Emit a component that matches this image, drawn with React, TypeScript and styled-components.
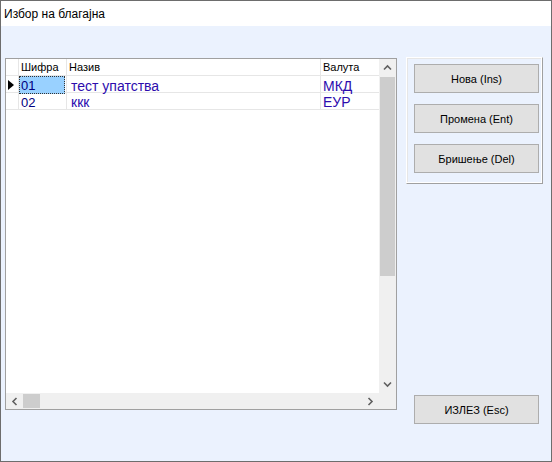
import React from "react";
import styled, { createGlobalStyle } from "styled-components";

const GlobalStyle = createGlobalStyle`
  html, body {
    margin: 0;
    padding: 0;
    background: #ffffff;
  }
  * {
    box-sizing: border-box;
  }
`;

const Window = styled.div`
  width: 552px;
  height: 462px;
  border: 1px solid #6d6d6d;
  display: flex;
  flex-direction: column;
  font-family: "Liberation Sans", Arial, sans-serif;
  background: #ebf2fe;
`;

const TitleBar = styled.div`
  height: 25px;
  background: #ffffff;
  padding-left: 3px;
  display: flex;
  align-items: center;
  font-size: 12px;
  color: #000;
`;

const Body = styled.div`
  flex: 1;
  display: flex;
  align-items: flex-start;
  padding: 31px 0 0 4px;
  gap: 9px;
`;

const GridBox = styled.div`
  margin-top: 1px;
  width: 392px;
  height: 352px;
  border: 1px solid #a0a0a0;
  background: #ffffff;
  display: grid;
  grid-template-columns: 373px 17px;
  grid-template-rows: 334px 16px;
`;

const Rows = styled.div`
  display: flex;
  flex-direction: column;
  overflow: hidden;
`;

const Row = styled.div`
  display: grid;
  grid-template-columns: 13px 48px 254px 58px;
  height: 17px;
  border-bottom: 1px solid #e6e6e6;
`;

const Cell = styled.div<{ $size?: number; $color?: string; $pad?: number }>`
  border-right: 1px solid #e6e6e6;
  padding-left: ${(p) => p.$pad ?? 2}px;
  padding-top: ${(p) => ((p.$size ?? 11) > 12 ? 2 : 0)}px;
  display: flex;
  align-items: center;
  font-size: ${(p) => p.$size ?? 11}px;
  color: ${(p) => p.$color ?? "#000"};
  white-space: nowrap;
  overflow: hidden;
  &:last-child {
    border-right: none;
  }
`;

const Indicator = styled.div`
  border-right: 1px solid #e6e6e6;
  display: flex;
  align-items: center;
  padding-left: 2px;
`;

const SelectedCell = styled.div`
  border-right: 1px solid #e6e6e6;
  display: flex;
  align-items: stretch;
  padding: 0 1px 0 0;
`;

const Focus = styled.div`
  flex: 1;
  background: #99d1ff;
  border: 1px dotted #333;
  display: flex;
  align-items: center;
  padding: 1px 0 0 1px;
  font-size: 13px;
  color: #000080;
`;

const VScroll = styled.div`
  background: #f0f0f0;
  display: flex;
  flex-direction: column;
`;

const ArrowBox = styled.div<{ $w?: number; $h?: number }>`
  width: ${(p) => p.$w ?? 17}px;
  height: ${(p) => p.$h ?? 17}px;
  display: flex;
  align-items: center;
  justify-content: center;
  flex-shrink: 0;
`;

const VThumb = styled.div`
  margin: 1px 1px 0 1px;
  height: 199px;
  background: #cdcdcd;
`;

const Spacer = styled.div`
  flex: 1;
`;

const HScroll = styled.div`
  grid-column: 1 / span 2;
  background: #f0f0f0;
  display: flex;
  align-items: stretch;
`;

const HThumb = styled.div`
  width: 17px;
  margin: 1px 0;
  background: #cdcdcd;
`;

const Corner = styled.div`
  width: 17px;
  background: #f0f0f0;
`;

const Side = styled.div`
  height: 367px;
  display: flex;
  flex-direction: column;
`;

const Group = styled.div`
  width: 137px;
  border-top: 1px solid #ffffff;
  border-left: 1px solid #ffffff;
  border-right: 1px solid #a0a0a0;
  border-bottom: 1px solid #a0a0a0;
  box-shadow: inset -1px -1px 0 #ffffff, inset 1px 1px 0 #e6e6e6;
  padding: 6px 0 10px 7px;
  display: flex;
  flex-direction: column;
  gap: 11px;
`;

const Button = styled.button`
  width: 125px;
  height: 29px;
  background: #e1e1e1;
  border: 1px solid #adadad;
  font-family: "Liberation Sans", Arial, sans-serif;
  font-size: 11px;
  color: #000;
  padding: 0;
  margin: 0;
  cursor: pointer;
`;

const ExitButton = styled(Button)`
  margin-top: auto;
  margin-left: 8px;
`;

const Chevron: React.FC<{ dir: "up" | "down" | "left" | "right" }> = ({ dir }) => {
  const rot = { up: 0, right: 90, down: 180, left: 270 }[dir];
  return (
    <svg width="9" height="9" viewBox="0 0 9 9" style={{ transform: `rotate(${rot}deg)` }}>
      <path d="M1 6.5 L4.5 3 L8 6.5" fill="none" stroke="#606060" strokeWidth="1.6" />
    </svg>
  );
};

const Triangle = () => (
  <svg width="6" height="10" viewBox="0 0 6 10">
    <path d="M0 0 L6 5 L0 10 Z" fill="#000" />
  </svg>
);

const rows = [
  { code: "01", name: "тест упатства", cur: "МКД" },
  { code: "02", name: "ккк", cur: "ЕУР" },
];

export default function App() {
  return (
    <>
      <GlobalStyle />
      <Window>
        <TitleBar>Избор на благајна</TitleBar>
        <Body>
          <GridBox>
            <Rows>
              <Row>
                <Indicator />
                <Cell>Шифра</Cell>
                <Cell>Назив</Cell>
                <Cell>Валута</Cell>
              </Row>
              {rows.map((r, i) => (
                <Row key={r.code}>
                  <Indicator>{i === 0 && <Triangle />}</Indicator>
                  {i === 0 ? (
                    <SelectedCell>
                      <Focus>{r.code}</Focus>
                    </SelectedCell>
                  ) : (
                    <Cell $size={13} $color="#000080">
                      {r.code}
                    </Cell>
                  )}
                  <Cell $size={14} $pad={4} $color="#2d0cae">
                    {r.name}
                  </Cell>
                  <Cell $size={14} $color="#2d0cae">
                    {r.cur}
                  </Cell>
                </Row>
              ))}
            </Rows>
            <VScroll>
              <ArrowBox>
                <Chevron dir="up" />
              </ArrowBox>
              <VThumb />
              <Spacer />
              <ArrowBox>
                <Chevron dir="down" />
              </ArrowBox>
            </VScroll>
            <HScroll>
              <ArrowBox $h={16}>
                <Chevron dir="left" />
              </ArrowBox>
              <HThumb />
              <Spacer />
              <ArrowBox $h={16}>
                <Chevron dir="right" />
              </ArrowBox>
              <Corner />
            </HScroll>
          </GridBox>
          <Side>
            <Group>
              <Button>Нова (Ins)</Button>
              <Button>Промена (Ent)</Button>
              <Button>Бришење (Del)</Button>
            </Group>
            <ExitButton>ИЗЛЕЗ (Esc)</ExitButton>
          </Side>
        </Body>
      </Window>
    </>
  );
}
